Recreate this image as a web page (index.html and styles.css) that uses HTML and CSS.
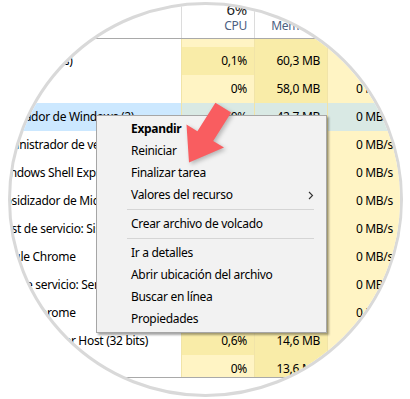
FILE: index.html
```
<!DOCTYPE html>
<html lang="es">
<head>
    <meta charset="UTF-8">
    <meta name="viewport" content="width=device-width, initial-scale=1.0">
    <title>Administrador de tareas</title>
    <link rel="stylesheet" href="styles.css">
</head>
<body>
    <div class="lens">
        <div class="tm">
            <div class="head">
                <div class="hcell name"></div>
                <div class="hcell num"><span class="pct">6%</span><span class="lbl">CPU</span></div>
                <div class="hcell num"><span class="pct">48%</span><span class="lbl">Memoria</span></div>
                <div class="hcell num"><span class="pct">0%</span><span class="lbl">Disco</span></div>
                <div class="hcell num net"></div>
            </div>
            <div class="list">
                <div class="rows">
                    <div class="row"><div class="cell name"><span>Cortana</span></div><div class="cell cpu">0%</div><div class="cell mem">20,1 MB</div><div class="cell disk">0 MB/s</div><div class="cell net"></div></div>
                    <div class="row"><div class="cell name"><span>Spotify (32 bits)</span></div><div class="cell cpu hot">0,1%</div><div class="cell mem">60,3 MB</div><div class="cell disk">0 MB/s</div><div class="cell net"></div></div>
                    <div class="row"><div class="cell name"><span>Skype</span></div><div class="cell cpu">0%</div><div class="cell mem">58,0 MB</div><div class="cell disk">0 MB/s</div><div class="cell net"></div></div>
                    <div class="row selected"><div class="cell name"><span>Explorador de Windows (2)</span></div><div class="cell cpu">0,0%</div><div class="cell mem">42,7 MB</div><div class="cell disk">0 MB/s</div><div class="cell net"></div></div>
                    <div class="row"><div class="cell name"><span>Administrador de ventanas del escritorio</span></div><div class="cell cpu">0,3%</div><div class="cell mem">39,2 MB</div><div class="cell disk">0 MB/s</div><div class="cell net"></div></div>
                    <div class="row"><div class="cell name"><span class="in">Windows Shell Experience Host</span></div><div class="cell cpu">0%</div><div class="cell mem">31,8 MB</div><div class="cell disk">0 MB/s</div><div class="cell net"></div></div>
                    <div class="row"><div class="cell name"><span>Subsidizador de Microsoft Office</span></div><div class="cell cpu">0%</div><div class="cell mem">27,4 MB</div><div class="cell disk">0 MB/s</div><div class="cell net"></div></div>
                    <div class="row"><div class="cell name"><span class="in">Host de servicio: Sistema local</span></div><div class="cell cpu">0%</div><div class="cell mem">24,9 MB</div><div class="cell disk">0 MB/s</div><div class="cell net"></div></div>
                    <div class="row"><div class="cell name"><span>Google Chrome</span></div><div class="cell cpu">0%</div><div class="cell mem">22,0 MB</div><div class="cell disk">0 MB/s</div><div class="cell net"></div></div>
                    <div class="row"><div class="cell name"><span>Host de servicio: Servicio de red</span></div><div class="cell cpu">0%</div><div class="cell mem">18,3 MB</div><div class="cell disk">0 MB/s</div><div class="cell net"></div></div>
                    <div class="row"><div class="cell name"><span>Google Chrome</span></div><div class="cell cpu">0%</div><div class="cell mem">16,2 MB</div><div class="cell disk">0 MB/s</div><div class="cell net"></div></div>
                    <div class="row"><div class="cell name"><span>Runtime Broker Host (32 bits)</span></div><div class="cell cpu hot">0,6%</div><div class="cell mem">14,6 MB</div><div class="cell disk">0 MB/s</div><div class="cell net"></div></div>
                    <div class="row"><div class="cell name"><span>Microsoft OneDrive</span></div><div class="cell cpu">0%</div><div class="cell mem">13,6 MB</div><div class="cell disk">0 MB/s</div><div class="cell net"></div></div>
                </div>
            </div>
            <div class="status"></div>
        </div>
    </div>

    <div class="menu">
        <div class="item bold">Expandir</div>
        <div class="item">Reiniciar</div>
        <div class="item">Finalizar tarea</div>
        <div class="item sub">Valores del recurso
            <svg class="chev" width="6" height="9" viewBox="0 0 6 9"><polyline points="1,1 4.5,4.5 1,8" fill="none" stroke="#333" stroke-width="1.1"/></svg>
        </div>
        <div class="sep"></div>
        <div class="item">Crear archivo de volcado</div>
        <div class="sep"></div>
        <div class="item">Ir a detalles</div>
        <div class="item">Abrir ubicación del archivo</div>
        <div class="item">Buscar en línea</div>
        <div class="item">Propiedades</div>
    </div>

    <svg class="arrow" width="410" height="399" viewBox="0 0 410 399">
        <polygon points="189,162.5 224,147.5 213.2,141 231.2,112.5 215.4,102.7 197.4,131.2 186.5,124.5" fill="#f95d60"/>
    </svg>
</body>
</html>
```

FILE: styles.css
```
body {
    margin: 0;
    background: #ffffff;
    font-family: 'Noto Sans', sans-serif;
    font-size: 12px;
    letter-spacing: -0.3px;
    color: #000000;
}
.lens {
    box-sizing: border-box;
    width: 395px;
    height: 395px;
    margin: 2px 0 0 8px;
    border: 3px solid #d9d9d9;
    border-radius: 50%;
    overflow: hidden;
    background: #ffffff;
}
.tm {
    width: 410px;
    margin: -5px 0 0 -11px;
}
.head {
    display: flex;
    height: 38px;
    border-bottom: 1px solid #a9a9a9;
}
.hcell {
    box-sizing: border-box;
    flex: none;
}
.hcell.name {
    width: 181px;
}
.hcell.num {
    width: 73px;
    border-left: 1px solid #dcdcdc;
    display: flex;
    flex-direction: column;
    align-items: flex-end;
    justify-content: flex-end;
    padding: 0 7px 4px 0;
}
.hcell.net {
    width: 10px;
}
.pct {
    font-size: 15px;
    line-height: 18px;
    color: #1e1e1e;
}
.lbl {
    line-height: 16px;
    color: #4c607f;
}
.list {
    height: 338px;
    overflow: hidden;
}
.rows {
    margin-top: -20px;
}
.row {
    display: flex;
    height: 28px;
}
.cell {
    box-sizing: border-box;
    flex: none;
    line-height: 28px;
    white-space: nowrap;
}
.cell.name {
    width: 181px;
}
.cell.name span {
    margin-left: -9px;
}
.cell.name span.in {
    margin-left: -4px;
}
.cell.cpu, .cell.mem, .cell.disk {
    width: 73px;
    text-align: right;
    padding-right: 7px;
    background: #fff4c4;
    border-left: 1px solid #f1e4a8;
}
.cell.mem, .cell.hot {
    background: #f9eca8;
}
.cell.net {
    width: 10px;
    background: #fff4c4;
    border-left: 1px solid #f1e4a8;
}
.row.selected .cell.name {
    background: #cce8ff;
}
.row.selected .cell.cpu, .row.selected .cell.mem, .row.selected .cell.disk, .row.selected .cell.net {
    background: #d9e9e4;
}
.status {
    height: 30px;
    border-top: 1px solid #a9a9a9;
}
.menu {
    position: absolute;
    left: 96px;
    top: 115px;
    box-sizing: border-box;
    width: 231px;
    padding: 2px 0;
    background: #f2f2f2;
    border: 1px solid #a6a6a6;
    box-shadow: 2px 2px 2px rgba(0, 0, 0, 0.35);
}
.item {
    position: relative;
    height: 22px;
    line-height: 22px;
    padding-left: 34px;
    white-space: nowrap;
}
.item.bold {
    font-weight: bold;
}
.chev {
    position: absolute;
    right: 12px;
    top: 7px;
}
.sep {
    height: 1px;
    margin: 3px 12px 3px 30px;
    background: #d5d5d5;
}
.arrow {
    position: absolute;
    left: 0;
    top: 0;
    filter: drop-shadow(2px 2px 2px rgba(0, 0, 0, 0.25));
}
```
